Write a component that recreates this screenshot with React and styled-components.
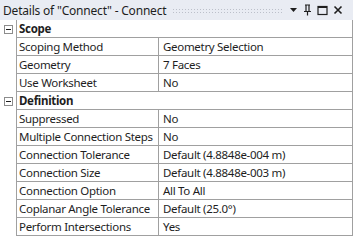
import React from 'react';
import styled, { createGlobalStyle } from 'styled-components';

const GlobalStyle = createGlobalStyle`
  html, body {
    margin: 0;
    padding: 0;
    background: #ffffff;
  }
  body {
    font-family: "Noto Sans", "Open Sans", sans-serif;
    font-size: 12px;
    color: #1e1e1e;
  }
`;

const Panel = styled.div`
  width: 353px;
  height: 240px;
  background: #ffffff;
  overflow: hidden;
`;

const TitleBar = styled.div`
  height: 20px;
  display: flex;
  align-items: center;
  background: #e9ecf3;
  padding: 0 10px 0 3px;
  box-sizing: border-box;

  .title {
    white-space: nowrap;
    font-size: 12px;
    letter-spacing: -0.2px;
    color: #1e1e1e;
  }

  .grip {
    flex: 1;
    height: 5px;
    margin: 0 6px 0 6px;
    background-image: radial-gradient(circle, #bcc0ca 0.6px, transparent 0.9px);
    background-size: 3px 3px;
    background-position: 0 0;
  }

  .buttons {
    display: flex;
    align-items: center;
    gap: 5px;
  }
`;

const Body = styled.div`
  display: grid;
  grid-template-columns: 16px 1fr;
`;

const Gutter = styled.div`
  display: flex;
  flex-direction: column;
`;

const GutterCell = styled.div`
  height: 18px;
  display: flex;
  align-items: center;
  padding-left: 4px;
`;

const Toggle = styled.div`
  width: 7px;
  height: 7px;
  border: 1px solid #8c8c8c;
  background: #ffffff;
  position: relative;

  &::after {
    content: '';
    position: absolute;
    left: 1px;
    right: 1px;
    top: 3px;
    height: 1px;
    background: #1e1e1e;
  }
`;

const Table = styled.div`
  border-left: 1px solid #a0a0a0;
  border-right: 1px solid #a0a0a0;
  display: flex;
  flex-direction: column;
`;

const Row = styled.div`
  height: 18px;
  box-sizing: border-box;
  border-bottom: 1px solid #a0a0a0;
  display: grid;
  grid-template-columns: ${p => (p.$header ? '1fr' : '141px 1fr')};
  align-items: center;
`;

const Cell = styled.div`
  height: 100%;
  display: flex;
  align-items: center;
  padding-left: ${p => (p.$value ? '4px' : '2px')};
  white-space: nowrap;
  overflow: hidden;
  font-size: 11.5px;
  font-weight: ${p => (p.$bold ? 700 : 400)};
  border-left: ${p => (p.$value ? '1px solid #a0a0a0' : 'none')};
  letter-spacing: -0.3px;
`;

const sections = [
  {
    name: 'Scope',
    rows: [
      ['Scoping Method', 'Geometry Selection'],
      ['Geometry', '7 Faces'],
      ['Use Worksheet', 'No'],
    ],
  },
  {
    name: 'Definition',
    rows: [
      ['Suppressed', 'No'],
      ['Multiple Connection Steps', 'No'],
      ['Connection Tolerance', 'Default (4.8848e-004 m)'],
      ['Connection Size', 'Default (4.8848e-003 m)'],
      ['Connection Option', 'All To All'],
      ['Coplanar Angle Tolerance', 'Default (25.0°)'],
      ['Perform Intersections', 'Yes'],
    ],
  },
];

const DropIcon = () => (
  <svg width="9" height="6" viewBox="0 0 9 6">
    <path d="M1 1 H8 L4.5 5 Z" fill="#1e1e1e" />
  </svg>
);

const PinIcon = () => (
  <svg width="9" height="12" viewBox="0 0 9 12">
    <path d="M2 1 H7 M3 1 V7 M6 1 V7 M1 7.5 H8 M4.5 7.5 V11.5" stroke="#1e1e1e" strokeWidth="1.2" fill="none" />
  </svg>
);

const MaxIcon = () => (
  <svg width="11" height="11" viewBox="0 0 11 11">
    <rect x="1" y="1.5" width="9" height="8" stroke="#1e1e1e" strokeWidth="1.2" fill="none" />
    <path d="M1 2 H10" stroke="#1e1e1e" strokeWidth="2" />
  </svg>
);

const CloseIcon = () => (
  <svg width="10" height="10" viewBox="0 0 10 10">
    <path d="M1.5 1.5 L8.5 8.5 M8.5 1.5 L1.5 8.5" stroke="#1e1e1e" strokeWidth="1.6" />
  </svg>
);

const App = () => {
  const gutter = [];
  const rows = [];
  sections.forEach(s => {
    gutter.push(
      <GutterCell key={s.name}>
        <Toggle />
      </GutterCell>
    );
    rows.push(
      <Row key={s.name} $header>
        <Cell $bold>{s.name}</Cell>
      </Row>
    );
    s.rows.forEach(([label, value]) => {
      gutter.push(<GutterCell key={label} />);
      rows.push(
        <Row key={label}>
          <Cell>{label}</Cell>
          <Cell $value>{value}</Cell>
        </Row>
      );
    });
  });

  return (
    <Panel>
      <GlobalStyle />
      <TitleBar>
        <span className="title">Details of "Connect" - Connect</span>
        <div className="grip" />
        <div className="buttons">
          <DropIcon />
          <PinIcon />
          <MaxIcon />
          <CloseIcon />
        </div>
      </TitleBar>
      <Body>
        <Gutter>{gutter}</Gutter>
        <Table>{rows}</Table>
      </Body>
    </Panel>
  );
};

export default App;
